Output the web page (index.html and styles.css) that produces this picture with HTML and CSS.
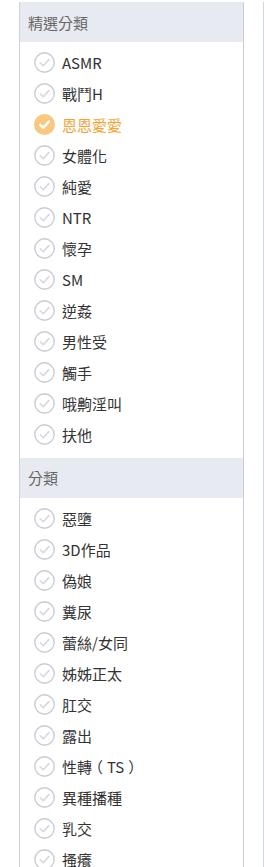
FILE: index.html
```html
<!DOCTYPE html>
<html lang="zh-Hant">
<head>
<meta charset="utf-8">
<title>分類</title>
<link rel="stylesheet" href="styles.css">
</head>
<body>
<div class="layout">
  <div class="panel">
    <div class="section">
      <div class="section-head">精選分類</div>
      <ul class="list">
        <li class="item"><span class="chk"><svg viewBox="0 0 21 21"><circle cx="10.5" cy="10.5" r="9.7"/><path d="M6.2 10.8 L9.3 13.8 L14.9 7.6"/></svg></span><span class="label">ASMR</span></li>
        <li class="item"><span class="chk"><svg viewBox="0 0 21 21"><circle cx="10.5" cy="10.5" r="9.7"/><path d="M6.2 10.8 L9.3 13.8 L14.9 7.6"/></svg></span><span class="label">戰鬥H</span></li>
        <li class="item on"><span class="chk"><svg viewBox="0 0 21 21"><circle cx="10.5" cy="10.5" r="10.5"/><path d="M6.2 10.8 L9.3 13.8 L14.9 7.6"/></svg></span><span class="label">恩恩愛愛</span></li>
        <li class="item"><span class="chk"><svg viewBox="0 0 21 21"><circle cx="10.5" cy="10.5" r="9.7"/><path d="M6.2 10.8 L9.3 13.8 L14.9 7.6"/></svg></span><span class="label">女體化</span></li>
        <li class="item"><span class="chk"><svg viewBox="0 0 21 21"><circle cx="10.5" cy="10.5" r="9.7"/><path d="M6.2 10.8 L9.3 13.8 L14.9 7.6"/></svg></span><span class="label">純愛</span></li>
        <li class="item"><span class="chk"><svg viewBox="0 0 21 21"><circle cx="10.5" cy="10.5" r="9.7"/><path d="M6.2 10.8 L9.3 13.8 L14.9 7.6"/></svg></span><span class="label">NTR</span></li>
        <li class="item"><span class="chk"><svg viewBox="0 0 21 21"><circle cx="10.5" cy="10.5" r="9.7"/><path d="M6.2 10.8 L9.3 13.8 L14.9 7.6"/></svg></span><span class="label">懷孕</span></li>
        <li class="item"><span class="chk"><svg viewBox="0 0 21 21"><circle cx="10.5" cy="10.5" r="9.7"/><path d="M6.2 10.8 L9.3 13.8 L14.9 7.6"/></svg></span><span class="label">SM</span></li>
        <li class="item"><span class="chk"><svg viewBox="0 0 21 21"><circle cx="10.5" cy="10.5" r="9.7"/><path d="M6.2 10.8 L9.3 13.8 L14.9 7.6"/></svg></span><span class="label">逆姦</span></li>
        <li class="item"><span class="chk"><svg viewBox="0 0 21 21"><circle cx="10.5" cy="10.5" r="9.7"/><path d="M6.2 10.8 L9.3 13.8 L14.9 7.6"/></svg></span><span class="label">男性受</span></li>
        <li class="item"><span class="chk"><svg viewBox="0 0 21 21"><circle cx="10.5" cy="10.5" r="9.7"/><path d="M6.2 10.8 L9.3 13.8 L14.9 7.6"/></svg></span><span class="label">觸手</span></li>
        <li class="item"><span class="chk"><svg viewBox="0 0 21 21"><circle cx="10.5" cy="10.5" r="9.7"/><path d="M6.2 10.8 L9.3 13.8 L14.9 7.6"/></svg></span><span class="label">哦齁淫叫</span></li>
        <li class="item"><span class="chk"><svg viewBox="0 0 21 21"><circle cx="10.5" cy="10.5" r="9.7"/><path d="M6.2 10.8 L9.3 13.8 L14.9 7.6"/></svg></span><span class="label">扶他</span></li>
      </ul>
    </div>
    <div class="section">
      <div class="section-head">分類</div>
      <ul class="list">
        <li class="item"><span class="chk"><svg viewBox="0 0 21 21"><circle cx="10.5" cy="10.5" r="9.7"/><path d="M6.2 10.8 L9.3 13.8 L14.9 7.6"/></svg></span><span class="label">惡墮</span></li>
        <li class="item"><span class="chk"><svg viewBox="0 0 21 21"><circle cx="10.5" cy="10.5" r="9.7"/><path d="M6.2 10.8 L9.3 13.8 L14.9 7.6"/></svg></span><span class="label">3D作品</span></li>
        <li class="item"><span class="chk"><svg viewBox="0 0 21 21"><circle cx="10.5" cy="10.5" r="9.7"/><path d="M6.2 10.8 L9.3 13.8 L14.9 7.6"/></svg></span><span class="label">偽娘</span></li>
        <li class="item"><span class="chk"><svg viewBox="0 0 21 21"><circle cx="10.5" cy="10.5" r="9.7"/><path d="M6.2 10.8 L9.3 13.8 L14.9 7.6"/></svg></span><span class="label">糞尿</span></li>
        <li class="item"><span class="chk"><svg viewBox="0 0 21 21"><circle cx="10.5" cy="10.5" r="9.7"/><path d="M6.2 10.8 L9.3 13.8 L14.9 7.6"/></svg></span><span class="label">蕾絲/女同</span></li>
        <li class="item"><span class="chk"><svg viewBox="0 0 21 21"><circle cx="10.5" cy="10.5" r="9.7"/><path d="M6.2 10.8 L9.3 13.8 L14.9 7.6"/></svg></span><span class="label">姊姊正太</span></li>
        <li class="item"><span class="chk"><svg viewBox="0 0 21 21"><circle cx="10.5" cy="10.5" r="9.7"/><path d="M6.2 10.8 L9.3 13.8 L14.9 7.6"/></svg></span><span class="label">肛交</span></li>
        <li class="item"><span class="chk"><svg viewBox="0 0 21 21"><circle cx="10.5" cy="10.5" r="9.7"/><path d="M6.2 10.8 L9.3 13.8 L14.9 7.6"/></svg></span><span class="label">露出</span></li>
        <li class="item"><span class="chk"><svg viewBox="0 0 21 21"><circle cx="10.5" cy="10.5" r="9.7"/><path d="M6.2 10.8 L9.3 13.8 L14.9 7.6"/></svg></span><span class="label">性轉<span class="po">（</span>TS<span class="pc">）</span></span></li>
        <li class="item"><span class="chk"><svg viewBox="0 0 21 21"><circle cx="10.5" cy="10.5" r="9.7"/><path d="M6.2 10.8 L9.3 13.8 L14.9 7.6"/></svg></span><span class="label">異種播種</span></li>
        <li class="item"><span class="chk"><svg viewBox="0 0 21 21"><circle cx="10.5" cy="10.5" r="9.7"/><path d="M6.2 10.8 L9.3 13.8 L14.9 7.6"/></svg></span><span class="label">乳交</span></li>
        <li class="item"><span class="chk"><svg viewBox="0 0 21 21"><circle cx="10.5" cy="10.5" r="9.7"/><path d="M6.2 10.8 L9.3 13.8 L14.9 7.6"/></svg></span><span class="label">搔癢</span></li>
      </ul>
    </div>
  </div>
  <div class="side"></div>
</div>
</body>
</html>
```

FILE: styles.css
```css
html, body {
  margin: 0;
  padding: 0;
  background: #ffffff;
  height: 100%;
  overflow: hidden;
}

body {
  font-family: "Noto Sans CJK TC", "Noto Sans", sans-serif;
  color: #333333;
}

.layout {
  display: flex;
  align-items: stretch;
  min-height: 100%;
  padding-top: 2px;
  box-sizing: border-box;
}

.panel {
  margin-left: 19px;
  width: 225px;
  flex: 0 0 225px;
  border-left: 1px solid #d0d2dc;
  border-right: 1px solid #c8cad6;
  box-sizing: border-box;
}

.side {
  margin-left: 19px;
  flex: 1;
  border-left: 1px solid #d4d6de;
}

.section-head {
  height: 40px;
  display: flex;
  align-items: center;
  padding-left: 8px;
  background: #e8eaf1;
  color: #666666;
  font-size: 15px;
  line-height: 1;
}

.list {
  list-style: none;
  margin: 0;
  padding: 5px 0 7.5px 0;
}

.item {
  height: 31px;
  display: flex;
  align-items: center;
  padding-left: 14px;
  font-size: 15px;
  line-height: 1;
  color: #333333;
}

.chk {
  width: 21px;
  height: 21px;
  flex: 0 0 21px;
  display: block;
}

.chk svg {
  display: block;
  width: 21px;
  height: 21px;
}

.chk circle {
  fill: #ffffff;
  stroke: #cbccd4;
  stroke-width: 1.4;
}

.chk path {
  fill: none;
  stroke: #d6d7e3;
  stroke-width: 1.6;
  stroke-linecap: round;
  stroke-linejoin: round;
}

.label {
  margin-left: 7px;
  text-spacing-trim: space-all;
}

.po,
.pc {
  font-feature-settings: "halt" 1;
}

.po {
  padding: 0 4px 0 3.5px;
}

.pc {
  padding: 0 3.5px 0 4px;
}

.item.on {
  color: #f3a533;
}

.item.on circle {
  fill: #f9c880;
  stroke: none;
}

.item.on path {
  stroke: #ffffff;
  stroke-width: 2.4;
}
```
